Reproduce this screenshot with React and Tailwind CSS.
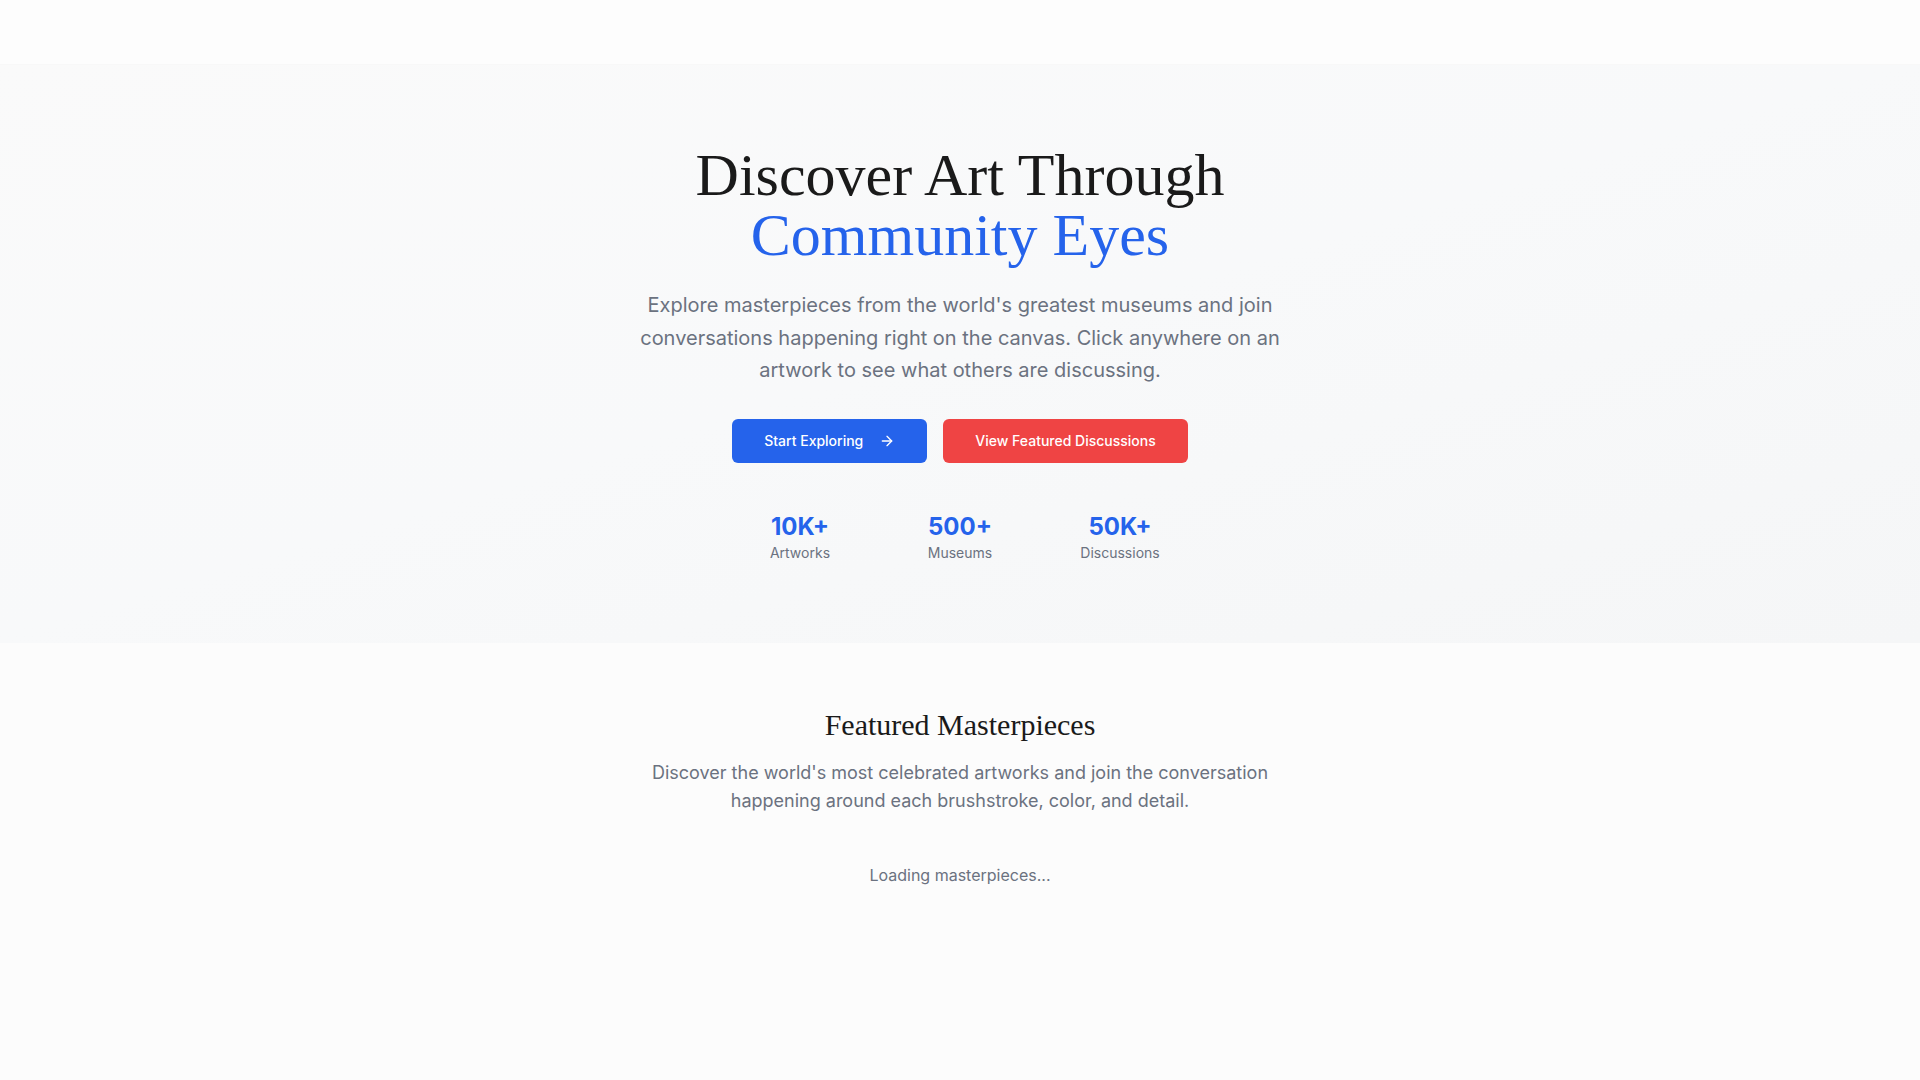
import React from 'react';
import { ArrowRight } from 'lucide-react';

const stats = [
  { value: '10K+', label: 'Artworks' },
  { value: '500+', label: 'Museums' },
  { value: '50K+', label: 'Discussions' },
];

// Hero section
const Hero = () => (
  <section className="bg-gradient-to-br from-[#fafafa] via-[#f8f9fa] to-[#f5f6f7] py-20 px-4">
    <div className="max-w-4xl mx-auto text-center">
      <h1 className="font-['Liberation_Serif',serif] text-6xl leading-none font-normal text-[#1a1a1a] mb-6">
        Discover Art Through
        <span className="block text-[#2563eb]">Community Eyes</span>
      </h1>
      <p className="text-xl leading-relaxed text-[#6b7280] max-w-2xl mx-auto mb-8">
        Explore masterpieces from the world's greatest museums and join conversations happening right on the canvas. Click anywhere on an artwork to see what others are discussing.
      </p>
      <div className="flex justify-center gap-4 mb-12">
        <button className="flex items-center bg-[#2563eb] text-white text-sm font-medium px-8 py-3 rounded-md">
          Start Exploring
          <ArrowRight className="ml-4 w-4 h-4" strokeWidth={2} />
        </button>
        <button className="bg-[#ef4444] text-white text-sm font-medium px-8 py-3 rounded-md">
          View Featured Discussions
        </button>
      </div>
      <div className="grid grid-cols-3 gap-8 max-w-md mx-auto">
        {stats.map((s) => (
          <div key={s.label} className="text-center">
            <div className="text-2xl font-bold text-[#2563eb]">{s.value}</div>
            <div className="text-sm text-[#6b7280]">{s.label}</div>
          </div>
        ))}
      </div>
    </div>
  </section>
);

// Featured section
const Featured = () => (
  <section className="py-16 px-4">
    <div className="max-w-7xl mx-auto text-center">
      <h2 className="font-['Liberation_Serif',serif] text-3xl text-[#1a1a1a] mb-4">
        Featured Masterpieces
      </h2>
      <p className="text-lg text-[#6b7280] max-w-2xl mx-auto mb-12">
        Discover the world's most celebrated artworks and join the conversation happening around each brushstroke, color, and detail.
      </p>
      <div className="text-base text-[#6b7280]">Loading masterpieces...</div>
    </div>
  </section>
);

export default function App() {
  return (
    <div className="min-h-screen bg-[#fcfcfc] font-['Inter',sans-serif]">
      <header className="h-16 bg-[#fdfdfd] border-b border-[#f8f8f8] box-content" />
      <Hero />
      <Featured />
    </div>
  );
}
